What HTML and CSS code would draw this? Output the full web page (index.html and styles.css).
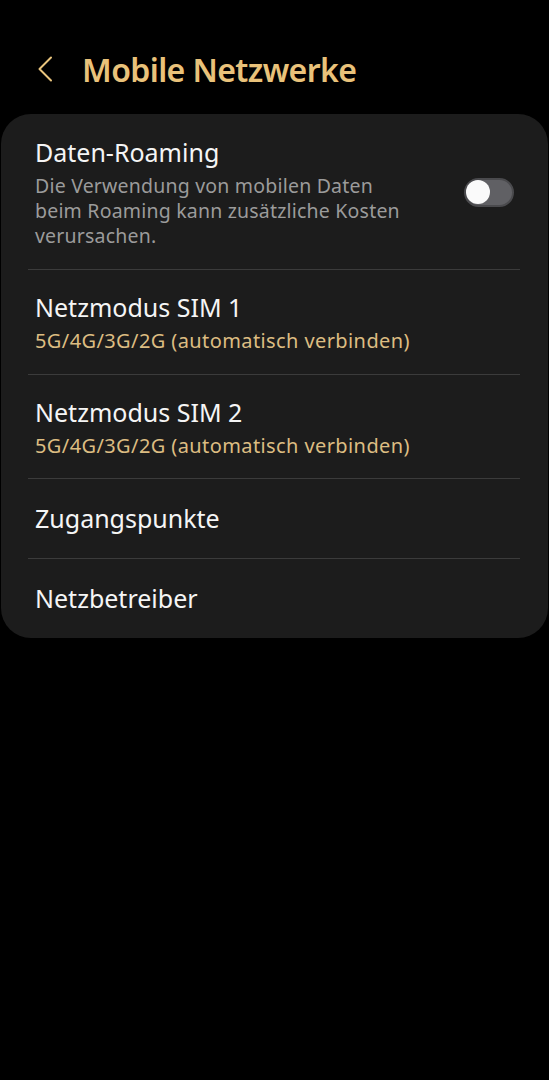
FILE: index.html
```html
<!DOCTYPE html>
<html lang="de">
<head>
    <meta charset="UTF-8">
    <meta name="viewport" content="width=device-width, initial-scale=1.0">
    <title>Mobile Netzwerke</title>
    <link rel="stylesheet" href="styles.css">
</head>
<body>
    <div class="header">
        <svg class="back" width="16" height="26" viewBox="0 0 16 26">
            <path d="M14 1.5 L2.5 13 L14 24.5" fill="none" stroke="#e9c47d" stroke-width="2" stroke-linecap="round" stroke-linejoin="round"/>
        </svg>
        <h1 class="title">Mobile Netzwerke</h1>
    </div>

    <ul class="card">
        <li class="row row-switch">
            <div class="text">
                <div class="label">Daten-Roaming</div>
                <div class="desc">Die Verwendung von mobilen Daten beim Roaming kann zusätzliche Kosten verursachen.</div>
            </div>
            <div class="switch"><span class="knob"></span></div>
        </li>
        <li class="row">
            <div class="label">Netzmodus SIM 1</div>
            <div class="value">5G/4G/3G/2G (automatisch verbinden)</div>
        </li>
        <li class="row">
            <div class="label">Netzmodus SIM 2</div>
            <div class="value">5G/4G/3G/2G (automatisch verbinden)</div>
        </li>
        <li class="row row-single">
            <div class="label">Zugangspunkte</div>
        </li>
        <li class="row row-single">
            <div class="label">Netzbetreiber</div>
        </li>
    </ul>
</body>
</html>
```

FILE: styles.css
```css
*{
    margin: 0;
    padding: 0;
    box-sizing: border-box;
}
ul{
    list-style: none;
}
body{
    width: 549px;
    height: 1080px;
    background: #000;
    font-family: "Noto Sans", "Open Sans", sans-serif;
    color: #f5f5f5;
}
.header{
    display: flex;
    align-items: center;
    height: 114px;
    padding: 24px 0 0 37px;
}
.back{
    display: block;
    margin-right: 29px;
}
.title{
    font-size: 32px;
    font-weight: 600;
    color: #e9c27a;
    letter-spacing: -0.6px;
}
.card{
    margin: 0 1px;
    background: #1c1c1c;
    border-radius: 30px;
}
.row{
    margin: 0 28px 0 27px;
    padding: 21px 0 20.5px 7px;
    border-bottom: 1px solid #3b3b3b;
}
.row:last-child{
    border-bottom: none;
}
.row-switch{
    display: flex;
    align-items: center;
    padding-top: 22px;
    padding-bottom: 21px;
}
.row-single{
    padding-top: 23px;
    padding-bottom: 23px;
}
.text{
    flex: 1;
}
.label{
    font-size: 25px;
    line-height: 33px;
}
.desc{
    margin-top: 4px;
    width: 385px;
    font-size: 19.5px;
    letter-spacing: 0.2px;
    line-height: 25px;
    color: #9b9b9b;
}
.value{
    margin-top: 4px;
    font-size: 20px;
    letter-spacing: 0.4px;
    line-height: 25px;
    color: #dcbd82;
}
.switch{
    position: relative;
    width: 50px;
    height: 29px;
    margin-right: 6px;
    border-radius: 15px;
    background: #606064;
    border: 2px solid #4a4a4d;
}
.knob{
    position: absolute;
    left: 0;
    top: 0.5px;
    width: 24px;
    height: 24px;
    border-radius: 50%;
    background: #fafafa;
}
```
